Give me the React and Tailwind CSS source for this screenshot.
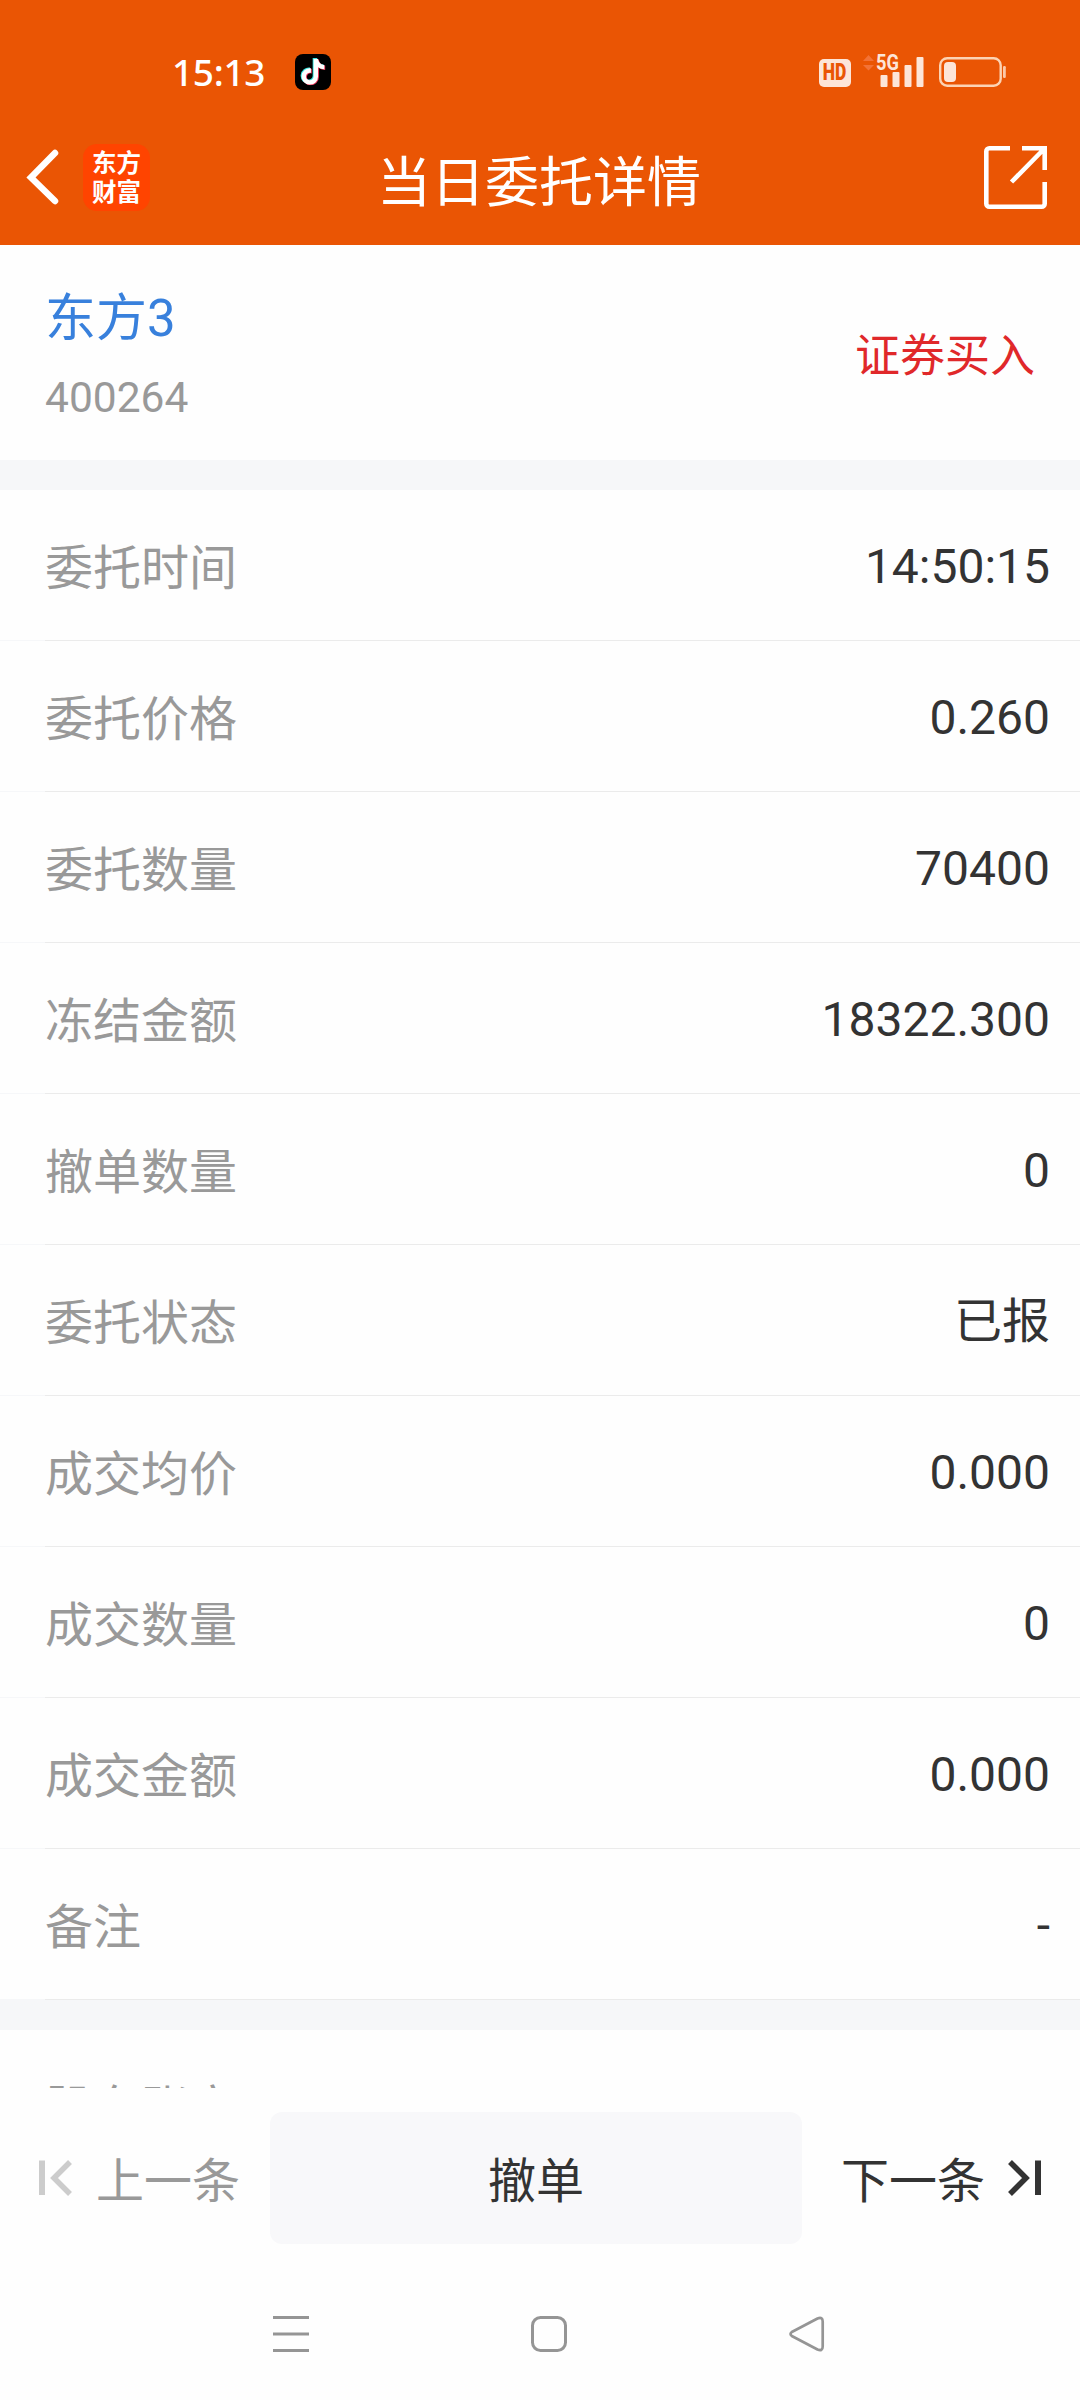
import { FaTiktok } from "react-icons/fa6";

const rows = [
  ["委托时间", "14:50:15"],
  ["委托价格", "0.260"],
  ["委托数量", "70400"],
  ["冻结金额", "18322.300"],
  ["撤单数量", "0"],
  ["委托状态", "已报"],
  ["成交均价", "0.000"],
  ["成交数量", "0"],
  ["成交金额", "0.000"],
  ["备注", "-"],
];

function TikTokIcon() {
  return (
    <svg className="h-9 w-9" viewBox="0 0 36 36">
      <rect width="36" height="36" rx="8" fill="#000" />
      <FaTiktok x="4" y="4" size={26} color="#35e5e0" />
      <FaTiktok x="5.800" y="5.300" size={26} color="#f0375a" />
      <FaTiktok x="4.900" y="4.700" size={26} color="#fff" />
    </svg>
  );
}

function StatusBar() {
  return (
    <div className="flex h-[144px] items-start pt-[54px] text-white">
      <div className="ml-[172px] w-[96px] whitespace-nowrap font-['Noto_Sans','Noto_Sans_CJK_SC',sans-serif] text-[37px] font-medium leading-[36px] tracking-[-0.3px]">15:13</div>
      <div className="ml-[27px]"><TikTokIcon /></div>
      <div className="ml-auto mr-[73px] flex items-start">
        <div className="mt-[5px] flex h-7 w-8 items-center justify-center rounded-[5px] bg-[#fde5d8] font-['Roboto',sans-serif] text-[23px] font-black leading-7 text-[#ea5504]">
          <span className="inline-block scale-x-[0.76]">HD</span>
        </div>
        <div className="relative ml-[12px] h-9 w-[62px]">
          <svg className="h-9 w-[62px]" viewBox="0 0 62 36">
            <path d="M0 7l5.500-6 5.500 6zM0 11h11l-5.500 5.500z" fill="#f37237" />
            <rect x="17.500" y="21" width="7" height="12" rx="1" fill="#fde5d8" />
            <rect x="29.500" y="18" width="7" height="15" rx="1" fill="#fde5d8" />
            <rect x="41.500" y="11" width="7" height="22" rx="1" fill="#fde5d8" />
            <rect x="53.500" y="3" width="7" height="30" rx="1" fill="#fde5d8" />
          </svg>
          <span className="absolute left-[13px] top-0 origin-left scale-x-[0.83] font-['Roboto',sans-serif] text-[22px] font-bold leading-[18px] text-[#fde5d8]">5G</span>
        </div>
        <svg className="ml-[14px] mt-[3px] h-[31px] w-[68px]" viewBox="0 0 68 31">
          <rect x="1.200" y="1.200" width="60.500" height="27.500" rx="7" fill="none" stroke="#fcd3b4" strokeWidth="2.400" />
          <rect x="5" y="5" width="12" height="20" rx="4" fill="#fde5d8" />
          <rect x="64" y="9" width="2.800" height="12" rx="1.200" fill="#fcc8a8" />
        </svg>
      </div>
    </div>
  );
}

function TitleBar() {
  return (
    <div className="grid h-[101px] grid-cols-[1fr_auto_1fr] items-start">
      <div className="flex">
        <svg className="ml-[25px] mt-[5px] h-[56px] w-[34px]" viewBox="0 0 34 56" fill="none" stroke="#fff" strokeWidth="6.500" strokeLinejoin="miter" strokeLinecap="round">
          <path d="M30 4L6 28.500L30 52" />
        </svg>
        <div className="ml-[24px] flex h-[67px] w-[67px] items-center justify-center rounded-[14px] bg-[#ff4400] pb-[4px]">
          <p className="font-['Noto_Sans_CJK_SC',sans-serif] text-[24.5px] font-bold leading-[29px] text-white">
            东方<br />财富
          </p>
        </div>
      </div>
      <h1 className="mr-[2px] mt-[8px] text-[54px] font-normal leading-[64px] text-white">当日委托详情</h1>
      <svg className="ml-auto mr-[33px] mt-[2px] h-[63px] w-[63px]" viewBox="0 0 63 63" fill="none" stroke="#fff" strokeWidth="4.600">
        <path d="M26 2.300H5.300a3 3 0 0 0-3 3V57.700a3 3 0 0 0 3 3H57.700a3 3 0 0 0 3-3V36" />
        <path d="M38 2.300H60.700V24M60 3L27.500 36" />
      </svg>
    </div>
  );
}

function Row({ label, value }) {
  return (
    <div>
      <div className="flex h-[150px] items-center justify-between bg-[#fefefe] pl-[45px] pr-[30px] text-[48px] leading-[70px]">
        <span className="pt-[8px] text-[#999999]">{label}</span>
        <span className="pt-[4px] text-[#333333]">{value}</span>
      </div>
      <div className="ml-[45px] h-px bg-[#ebebeb]" />
    </div>
  );
}

export default function App() {
  return (
    <div className="flex h-[2400px] w-[1080px] flex-col overflow-hidden bg-[#fefefe] font-['Roboto','Noto_Sans_CJK_SC',sans-serif]">
      <header className="bg-[#ea5504]">
        <StatusBar />
        <TitleBar />
      </header>

      <main className="h-[1843px] overflow-hidden bg-[#f6f7f9]">
        <section className="flex h-[215px] items-center justify-between bg-[#fefefe] pl-[45px] pr-[45px]">
          <div className="pt-[8px]">
            <div className="text-[51px] leading-[76px] text-[#3880dc]">东方3</div>
            <div className="mt-[6px] text-[42.5px] leading-[70px] text-[#999999]">400264</div>
          </div>
          <div className="pt-[8px] text-[45px] leading-[66px] text-[#e0282a]">证券买入</div>
        </section>
        <section className="mt-[30px]">
          {rows.map(([label, value]) => (
            <Row key={label} label={label} value={value} />
          ))}
        </section>
        <section className="mt-[30px]">
          <Row label="股东账户" value="" />
        </section>
      </main>

      <footer className="flex h-[180px] items-center text-[48px] leading-[70px]">
        <div className="flex w-[270px] items-center pl-[37px] text-[#999999]">
          <svg className="h-[36px] w-[36px]" viewBox="0 0 36 36" fill="none" stroke="#cccccc">
            <path d="M5 .5V35" strokeWidth="6" />
            <path d="M33 2L17 18L33 34" strokeWidth="5.500" />
          </svg>
          <span className="ml-[23px] pt-[8px]">上一条</span>
        </div>
        <button className="h-[132px] w-[532px] rounded-[12px] bg-[#f8f8fa] pt-[8px] text-[#333333]">撤单</button>
        <div className="flex flex-1 items-center pl-[39px] text-[#333333]">
          <span className="pt-[8px]">下一条</span>
          <svg className="ml-[22px] h-[36px] w-[36px]" viewBox="0 0 36 36" fill="none" stroke="#333333">
            <path d="M31 .5V35" strokeWidth="6" />
            <path d="M3 2L19 18L3 34" strokeWidth="5.500" />
          </svg>
        </div>
      </footer>

      <nav className="flex h-[132px] items-center pl-[272px]">
        <svg className="h-[38px] w-[38px]" viewBox="0 0 38 38" stroke="#959595" strokeWidth="3">
          <path d="M1 2.500H37M1 19H37M1 35.500H37" />
        </svg>
        <svg className="ml-[220px] h-[38px] w-[38px]" viewBox="0 0 38 38" fill="none" stroke="#959595" strokeWidth="3">
          <rect x="2.500" y="2.500" width="33" height="33" rx="8" />
        </svg>
        <svg className="ml-[221px] h-[38px] w-[38px]" viewBox="0 0 38 38" fill="none" stroke="#959595" strokeWidth="2.700" strokeLinejoin="round">
          <path d="M2.800 17L28.500 3.500Q33.700 1.500 33.700 6.500V31.500Q33.700 36.500 28.500 34.500L2.800 21Q.2 19 2.800 17Z" />
        </svg>
      </nav>
    </div>
  );
}
